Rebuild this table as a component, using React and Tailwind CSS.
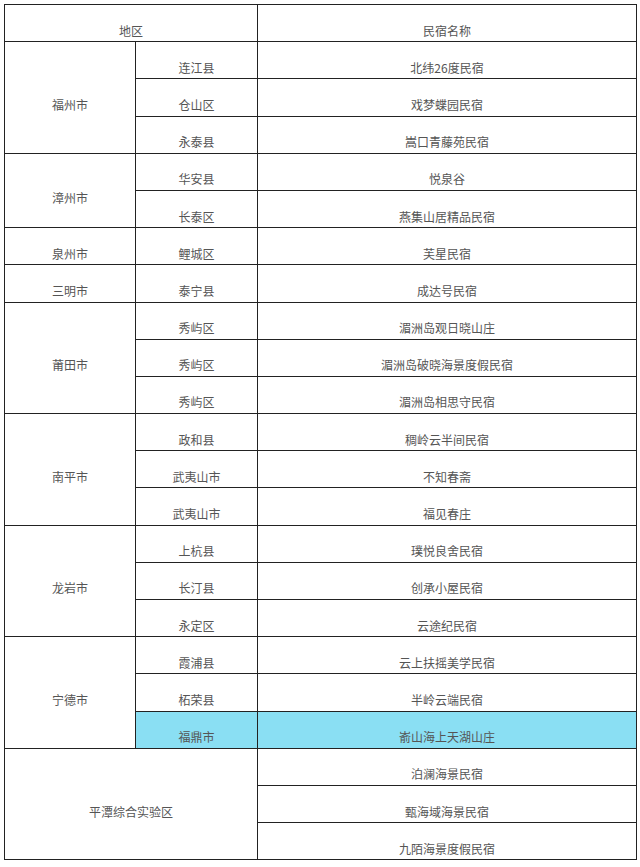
import React from "react";

const groups = [
  {
    city: "福州市",
    rows: [
      ["连江县", "北纬26度民宿"],
      ["仓山区", "戏梦蝶园民宿"],
      ["永泰县", "嵩口青藤苑民宿"],
    ],
  },
  {
    city: "漳州市",
    rows: [
      ["华安县", "悦泉谷"],
      ["长泰区", "燕集山居精品民宿"],
    ],
  },
  { city: "泉州市", rows: [["鲤城区", "芙星民宿"]] },
  { city: "三明市", rows: [["泰宁县", "成达号民宿"]] },
  {
    city: "莆田市",
    rows: [
      ["秀屿区", "湄洲岛观日晓山庄"],
      ["秀屿区", "湄洲岛破晓海景度假民宿"],
      ["秀屿区", "湄洲岛相思守民宿"],
    ],
  },
  {
    city: "南平市",
    rows: [
      ["政和县", "稠岭云半间民宿"],
      ["武夷山市", "不知春斋"],
      ["武夷山市", "福见春庄"],
    ],
  },
  {
    city: "龙岩市",
    rows: [
      ["上杭县", "璞悦良舍民宿"],
      ["长汀县", "创承小屋民宿"],
      ["永定区", "云途纪民宿"],
    ],
  },
  {
    city: "宁德市",
    rows: [
      ["霞浦县", "云上扶摇美学民宿"],
      ["柘荣县", "半岭云端民宿"],
      ["福鼎市", "嵛山海上天湖山庄", true],
    ],
  },
];

const pingtan = ["泊澜海景民宿", "甄海域海景民宿", "九陌海景度假民宿"];

const cell = "border border-[#222222] text-center align-middle pt-[14px] px-2 font-normal";

const App = () => {
  return (
    <div className="w-[640px] h-[867px] bg-white pt-[4px] pl-[4px] text-[12px] leading-[17px] text-[#555555] font-['Microsoft_YaHei','Noto_Sans_CJK_SC',sans-serif]">
      <table className="border-collapse table-fixed w-[632px]">
        <colgroup>
          <col className="w-[131px]" />
          <col className="w-[122px]" />
          <col className="w-[379px]" />
        </colgroup>
        <tbody>
          <tr className="h-[37.2px]">
            <td colSpan={2} className={cell}>
              地区
            </td>
            <td className={cell}>民宿名称</td>
          </tr>
          {groups.map((g) =>
            g.rows.map((r, i) => (
              <tr key={g.city + i} className="h-[37.2px]">
                {i === 0 && (
                  <td rowSpan={g.rows.length} className={cell}>
                    {g.city}
                  </td>
                )}
                <td className={`${cell} ${r[2] ? "bg-[#8adff3]" : ""}`}>{r[0]}</td>
                <td className={`${cell} ${r[2] ? "bg-[#8adff3]" : ""}`}>{r[1]}</td>
              </tr>
            ))
          )}
          {pingtan.map((name, i) => (
            <tr key={name} className="h-[37.2px]">
              {i === 0 && (
                <td rowSpan={3} colSpan={2} className={cell}>
                  平潭综合实验区
                </td>
              )}
              <td className={cell}>{name}</td>
            </tr>
          ))}
        </tbody>
      </table>
    </div>
  );
};

export default App;
